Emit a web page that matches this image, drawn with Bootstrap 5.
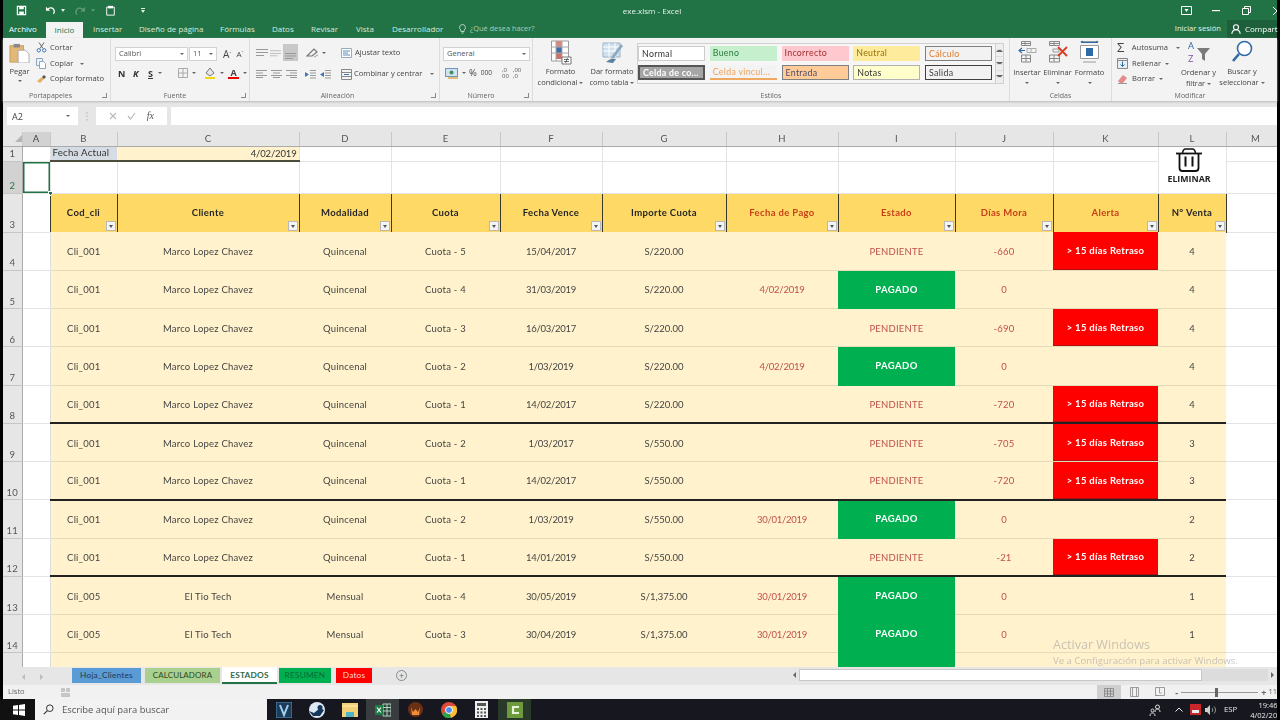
<!DOCTYPE html>
<html lang="es">
<head>
<meta charset="utf-8">
<title>exe.xlsm - Excel</title>
<link rel="stylesheet" href="https://cdn.jsdelivr.net/npm/bootstrap@5.3.0/dist/css/bootstrap.min.css">
<style>
html,body{height:720px;overflow:hidden;background:#000}
body{font-family:"Open Sans","Liberation Sans",sans-serif;font-size:8px;color:#444;line-height:1}
.xl-app{width:1280px;height:720px;display:flex;flex-direction:column;padding:0 3px;position:relative;overflow:hidden;filter:blur(.35px)}
svg{display:block;flex:none}
/* title */
.xl-top{height:38px;background:#217346;color:#e8f3ec;flex:none}
.xl-qat{height:20px;position:relative}
.xl-qat svg{position:absolute}
.xl-title{width:100%;text-align:center;font-size:8px;padding-top:7px;padding-left:24px}
.xl-tabs{height:18px;font-size:8px;color:#d7e9dd;white-space:nowrap}
.xl-tabs span{flex:none}
.xl-file{margin-left:6px;width:37px;color:#fff}
.xl-home{width:37px;height:16px;background:#f3f3f3;color:#217346;text-align:center;line-height:16px;margin-top:2px}
.xl-share{width:50px;height:18px;background:#1d5f3a;color:#fff;margin-left:6px}
/* ribbon */
.xl-ribbon{height:63px;background:#f3f3f3;flex:none;box-shadow:0 1px 2px #bbb;position:relative}
.xl-grp{height:63px;display:flex;flex-direction:column;border-right:1px solid #dcdcdc;position:relative;flex:none}
.xl-grp-b{height:50px;flex:none;position:relative}
.xl-lbl{height:13px;text-align:center;font-size:7px;color:#666;line-height:15px}
.xl-launch{position:absolute;right:3px;bottom:3px;width:5px;height:5px;border-right:1px solid #888;border-bottom:1px solid #888}
.g1{width:108px}.g2{width:139px}.g3{width:190px}.g4{width:93px}.g5{width:477px}.g6{width:102px}.g7{width:164px;border:0}
.g1 .xl-lbl{padding-right:12px}.g2 .xl-lbl{padding-right:10px}.g3 .xl-lbl{padding-right:14px}.g4 .xl-lbl{padding-right:10px}
.xl-i{font-size:7.6px;color:#444;white-space:nowrap}
.xl-tg{gap:3px}
.xl-stack{display:flex;flex-direction:column;justify-content:space-between}
.xl-rows{height:42px;margin-top:4px}
.xl-box{height:14px;background:#fff;border:1px solid #d2d2d2;color:#555;font-size:7.5px;padding:0 3px;display:flex;align-items:center;justify-content:space-between}
.xl-caret{width:0;height:0;border-left:2px solid transparent;border-right:2px solid transparent;border-top:2px solid #666;flex:none;display:inline-block;vertical-align:middle}
.xl-big{display:flex;flex-direction:column;align-items:center;flex:none;text-align:center;font-size:7.5px;line-height:11px;color:#444}
.xl-bigimg{height:26px;display:flex;align-items:center;justify-content:center;margin-bottom:1px}
.xl-bigimg.xl-lo{margin-bottom:2px}
.xl-tick{font-weight:700;font-size:9px;color:#333}
/* gallery */
.xl-gal{width:358px;height:41px;margin-top:5px;border:1px solid #d0d0d0;border-right:0;background:#f6f6f6;display:grid;grid-template-columns:repeat(5,67px);grid-auto-rows:15px;align-content:start;column-gap:4.75px;row-gap:4px;padding:2px 0 0 0;flex:none}
.xl-st{height:15px;font-size:8.8px;line-height:14px;padding-left:3px;overflow:hidden;white-space:nowrap;font-family:"Lato","Open Sans",sans-serif;letter-spacing:.3px}
.st-n{background:#fff;border:1px solid #ccc;color:#333}
.st-b{background:#c6efce;color:#2b7a3b}
.st-i{background:#ffc7ce;color:#a03030}
.st-ne{background:#ffeb9c;color:#96700a}
.st-c{background:#f2f2f2;border:1px solid #7f7f7f;color:#e07a2a}
.st-ce{background:#a5a5a5;border:2px solid #555;color:#fff;font-weight:700;line-height:11px}
.st-v{background:#f3f3f3;color:#f0a05a;border-bottom:2px solid #f0a860}
.st-e{background:#ffcc99;border:1px solid #7f7f7f;color:#4a4a6a}
.st-no{background:#ffffcc;border:1px solid #b2b2b2;color:#333}
.st-s{background:#f2f2f2;border:1px solid #3f3f3f;color:#3f3f3f}
.xl-galbar{width:9px;height:41px;margin-top:5px;border:1px solid #d0d0d0;background:#eee;display:flex;flex-direction:column;flex:none}
.xl-galbar i{flex:1;display:flex;align-items:center;justify-content:center;border-bottom:1px solid #ddd}
/* formula */
.xl-fbar{height:31px;background:#e6e6e6;padding:6px 0 7px 4px;flex:none;align-items:stretch}
.xl-fbar>div{background:#fff;display:flex;align-items:center;font-size:9px;color:#444}
.xl-name{width:71px;padding:0 8px 0 5px;justify-content:space-between}
.xl-grip{width:18px;display:flex;align-items:center;justify-content:center;flex:none}
.xl-fbtn{width:71px;justify-content:space-around;padding:0 8px}
.xl-finput{flex:1;margin-left:4px}
/* sheet */
.xl-wrap{height:535px;flex:none;overflow:hidden;background:#fff;position:relative}
table.xl-sheet{table-layout:fixed;width:1274px;margin:0;border-collapse:collapse;font-family:"Lato","Open Sans",sans-serif;font-size:9.5px;color:#444;letter-spacing:.22px;--bs-table-bg:transparent;--bs-table-color:#444;--bs-border-width:0}
table.xl-sheet>*>tr>*{padding:0;text-align:center;vertical-align:middle;font-weight:400;border:1px solid #e3e3e3;border-width:0 1px 1px 0;box-shadow:none;line-height:1}
table.xl-sheet>*>tr.h-c>*{background:#e6e6e6;color:#555;font-size:9.5px;border-color:#c8c8c8;border-bottom:1px solid #aaa}
table.xl-sheet>*>tr.h-c>th.xl-cm{padding-left:8px}
table.xl-sheet>*>tr>th.xl-rh{background:#e6e6e6;color:#555;font-size:9.5px;vertical-align:bottom;padding-bottom:2px;border-color:#c6c6c6;border-right:1px solid #aaa}
table.xl-sheet>*>tr.h-c>th.xl-on,table.xl-sheet>*>tr>th.xl-on{background:#d2d2d2;color:#217346}
table.xl-sheet>*>tr.h-c>th.xl-on{background:#d2d2d2;color:#444}
table.xl-sheet>*>tr>td.xl-sel{position:relative;box-shadow:inset 0 0 0 1.5px #217346}
.xl-handle{position:absolute;right:-3px;bottom:-3px;width:5px;height:5px;background:#217346;border:1px solid #fff}
table.xl-sheet>*>tr>td.c-fa{background:#d6dce4;text-align:left;padding-left:2px;color:#333;font-size:9.7px;border-bottom:2px solid #4d4d3c;border-right:0}
table.xl-sheet>*>tr>td.c-fd{background:#fff2cc;text-align:right;padding-right:2px;color:#333;font-size:9.5px;letter-spacing:-.15px;border-bottom:2px solid #4d4d3c}
table.xl-sheet>*>tr.h-h>td{background:#ffd966;font-weight:700;font-size:9.5px;color:#262626;position:relative;border:1px solid #3a3a2c;border-bottom:0;padding-bottom:0;letter-spacing:.35px}
table.xl-sheet>*>tr.h-h>td.xl-a,table.xl-sheet>*>tr.h-h>td.xl-m{background:#fff;border:0;border-right:1px solid #e3e3e3;border-bottom:1px solid #e3e3e3}
table.xl-sheet>*>tr.h-h>td.xl-a{border-right:0}
table.xl-sheet>*>tr.h-h>td.t-red{color:#c8401a}
.xl-fil{position:absolute;right:1px;bottom:1px;width:10px;height:10px;background:#f4f4f4;border:1px solid #b8b8b8;display:flex;align-items:center;justify-content:center}
.xl-fil::after{content:"";border-left:2.5px solid transparent;border-right:2.5px solid transparent;border-top:3px solid #555}
tr.xl-r{height:38.27px}
table.xl-sheet>*>tr.xl-r>td{background:#fff2cc;border-color:#e4dcba;border-width:0 0 1px 0;padding-top:1.5px}
table.xl-sheet>*>tr.xl-r>td:nth-child(7),table.xl-sheet>*>tr.xl-r>td:nth-child(9){letter-spacing:-.25px}
table.xl-sheet>*>tr.xl-r>td:nth-child(8){letter-spacing:0}
table.xl-sheet>*>tr.xl-r>td.xl-a,table.xl-sheet>*>tr.xl-r>td.xl-m{background:#fff;border-color:#e3e3e3}
table.xl-sheet>*>tr.xl-r>td.xl-a{border-right:1px solid #ddd}
table.xl-sheet>*>tr.xl-end>td:not(.xl-a):not(.xl-m){border-bottom:2px solid #222}
table.xl-sheet>*>tr.xl-r>td.t-r{color:#c0504d}
table.xl-sheet>*>tr.xl-r>td.c-g{background:#00b050;color:#fff;font-weight:700;border-color:#00b050;letter-spacing:.4px;padding-top:0}
table.xl-sheet>*>tr.xl-r>td.c-x{background:#f00;color:#fff;font-weight:700;box-shadow:inset 0 -1px 0 #b01010;letter-spacing:.3px;padding-top:0}
table.xl-sheet>*>tr>td.xl-elim{vertical-align:top;padding:1px 6px 0 0;font-weight:700;color:#222;font-size:8.8px;font-family:"Open Sans",sans-serif;letter-spacing:0;white-space:nowrap}
.xl-elim svg{margin:0 auto 3px}
.xl-wm{position:absolute;left:1050px;top:507px;color:rgba(165,165,165,.62);font-family:"Open Sans",sans-serif;pointer-events:none;white-space:nowrap}
.xl-wm b{display:block;font-weight:400;font-size:12.6px;margin-bottom:4px}
.xl-wm i{display:block;font-style:normal;font-size:9.6px}
/* sheet tabs */
.xl-sheetbar{height:18px;background:#e6e6e6;flex:none;position:relative;padding-top:1px}
.xl-nav{width:69px;margin-right:-69px;flex:none;display:flex;gap:15px;padding:6px 0 0 19px}
.xl-nav i{display:block}
.xl-tab{height:15px;font-size:8.3px;text-align:center;line-height:14px;flex:none;font-family:"Lato","Open Sans",sans-serif;letter-spacing:.2px}
.tb-b{width:69px;margin-left:69px;background:#5b9bd5;color:#203a55}
.tb-c{width:75px;margin-left:4px;background:#a9d08e;color:#2c4a20;font-size:8px;letter-spacing:.1px}
.tb-e{width:55px;margin-left:2px;background:#fff;color:#2f6a4a;font-weight:700;height:17px;margin-top:-1px;border-bottom:2px solid #217346;line-height:16px}
.tb-r{width:52px;margin-left:2px;background:#00b050;color:#0b6b35}
.tb-d{width:36px;margin-left:5px;background:#f00;color:#ffd5d5}
.xl-plus{margin-left:24px;margin-top:2px;width:11px;height:11px;border:1px solid #888;border-radius:50%;color:#666;font-size:9px;line-height:9px;text-align:center}
.xl-hs{margin-left:auto;width:487px;height:12px;display:flex;align-items:stretch;margin-top:1px}
.xl-hs i{display:block}
.xl-hs .hs-t{width:403px;background:#fff;border:1px solid #c8c8c8}
.xl-hs .hs-r{flex:1;background:#dcdcdc}
.xl-hs .hs-a{width:9px;display:flex;align-items:center;justify-content:center}
.xl-tri-l{border-top:3px solid transparent;border-bottom:3px solid transparent;border-right:3px solid #666}
.xl-tri-r{border-top:3px solid transparent;border-bottom:3px solid transparent;border-left:3px solid #666}
.xl-nav .xl-tri-l,.xl-nav .xl-tri-r{border-right-color:#bbb;border-left-color:#bbb}
/* status */
.xl-status{height:14px;background:#f1f1f1;flex:none;font-size:7.5px;color:#666;padding-left:5px}
.xl-sl{width:77px;height:1px;background:#999;position:relative;margin:0 3px}
.xl-sl i{position:absolute;left:34px;top:-4px;width:3px;height:9px;background:#666;display:block}
.xl-vbtn{height:14px;display:flex;align-items:center;justify-content:center;flex:none}
.vb1{width:24px;background:#cfcfcf}.vb2{width:28px}.vb3{width:22px}
.xl-minus{margin-left:4.5px;font-weight:700;font-size:9px}
.xl-zoomv{margin-left:2px}
/* taskbar */
.xl-task{height:21px;background:#17181f;flex:none;margin:0 0 0 -3px;color:#fff;position:relative;overflow:hidden}
.xl-start{width:35px;height:21px;background:#111;display:flex;align-items:center;justify-content:center;padding-left:3px;flex:none}
.xl-search{width:232px;height:21px;background:#f2f2f2;color:#555;font-size:9.4px;display:flex;align-items:center;padding-left:8px;gap:8px;flex:none}
.xl-ti{width:33px;height:21px;display:flex;align-items:center;justify-content:center;flex:none}
.xl-ti.on{background:#3a3d40}
.xl-ti.xl-ti-c{background:#2a3a2a}
.xl-tray{margin-left:auto;display:flex;align-items:center;font-size:7.8px;color:#e8e8e8;margin-right:-15px}
.xl-clock{text-align:center;line-height:10px;width:48px;font-size:7.5px;white-space:nowrap}
</style>
</head>
<body>
<div class="xl-app">

<header class="xl-top">
  <div class="xl-qat">
    <svg style="left:13px;top:5px" width="11" height="11" viewBox="0 0 12 12"><path d="M1.500 1.500h9v9h-9z" fill="none" stroke="#fff" stroke-width="1.300"/><path d="M3.500 1.500h5v3h-5zM3.500 7h5v3.500h-5z" fill="#fff"/></svg>
    <svg style="left:42px;top:5px" width="11" height="10" viewBox="0 0 13 12"><path d="M3 5.500C5 2.500 10 2.500 11 7c.2 1.200-.2 2.500-1 3.500" fill="none" stroke="#fff" stroke-width="1.500"/><path d="M1 2v5h5z" fill="#fff"/></svg>
    <svg style="left:58px;top:9px" width="4" height="3" viewBox="0 0 4 3"><path d="M0 0h4L2 3z" fill="#dfeee5"/></svg>
    <svg style="left:71px;top:5px" width="12" height="11" viewBox="0 0 13 12" opacity=".28"><path d="M10 5.500C8 2.500 3 2.500 2 7c-.2 1.200.2 2.500 1 3.500" fill="none" stroke="#fff" stroke-width="1.500"/><path d="M12 2v5H7z" fill="#fff"/></svg>
    <svg style="left:88px;top:9px" width="4" height="3" viewBox="0 0 4 3" opacity=".3"><path d="M0 0h4L2 3z" fill="#dfeee5"/></svg>
    <svg style="left:102px;top:5px" width="11" height="11" viewBox="0 0 12 13"><path d="M1.500 2.500h9v9.500h-9z" fill="none" stroke="#fff" stroke-width="1.100"/><path d="M3 1h6v3H3z" fill="#fff"/></svg>
    <svg style="left:138px;top:8px" width="4" height="5" viewBox="0 0 4 5"><path d="M0 0h4v1H0zM0 2h4L2 5z" fill="#dfeee5"/></svg>
    <div class="xl-title">exe.xlsm - Excel</div>
    <svg style="left:1178px;top:6px" width="11" height="9" viewBox="0 0 11 9"><path d="M.5.500h10v8H.5z" fill="none" stroke="#fff"/><path d="M3.500 3h4L5.500 6z" fill="#fff"/></svg>
    <svg style="left:1209px;top:10px" width="8" height="2" viewBox="0 0 8 2"><path d="M0 0h8v1.200H0z" fill="#fff"/></svg>
    <svg style="left:1239px;top:6px" width="9" height="9" viewBox="0 0 9 9"><path d="M.5 2.500h6v6h-6zM2.500 2.500v-2h6v6h-2" fill="none" stroke="#fff"/></svg>
    <svg style="left:1270px;top:7px" width="4" height="8" viewBox="0 0 4 8"><path d="M0 0l4 4M0 8l4-4" stroke="#fff" fill="none"/></svg>
  </div>
  <div class="xl-tabs d-flex align-items-center">
    <span class="xl-file">Archivo</span>
    <span class="xl-home">Inicio</span>
    <span style="margin-left:10px;width:46px">Insertar</span>
    <span style="width:81px">Diseño de página</span>
    <span style="width:52px">Fórmulas</span>
    <span style="width:39px">Datos</span>
    <span style="width:45px">Revisar</span>
    <span style="width:36px">Vista</span>
    <span style="width:67px">Desarrollador</span>
    <svg width="7" height="10" viewBox="0 0 7 10"><path d="M3.500.5a3 3 0 0 1 1.600 5.500v1.500H1.900V6A3 3 0 0 1 3.500.5zM2.400 9h2.200" fill="none" stroke="#d7e9dd" stroke-width=".8"/></svg>
    <span style="margin-left:4px;color:#a9cdb7;font-size:7.4px">¿Qué desea hacer?</span>
    <span class="ms-auto" style="color:#e6f1ea;font-size:7.6px">Iniciar sesión</span>
    <span class="xl-share d-flex align-items-center gap-1 ps-1">
      <svg width="10" height="10" viewBox="0 0 10 10"><circle cx="5" cy="3.200" r="2.500" fill="none" stroke="#fff" stroke-width="1.100"/><path d="M.8 9.800C1.200 7 3 5.800 5 5.800s3.800 1.200 4.200 4" fill="none" stroke="#fff" stroke-width="1.100"/></svg>Compart
    </span>
  </div>
</header>

<section class="xl-ribbon d-flex">
  <div class="xl-grp g1">
    <div class="xl-grp-b d-flex">
      <div class="xl-big" style="width:33px;margin-top:5px">
        <svg width="21" height="20" viewBox="0 0 23 22"><rect x="1" y="3" width="15" height="18" fill="#e3b877" stroke="#c19a5b"/><rect x="5" y="1" width="7" height="4" fill="#8a8a8a"/><path d="M10 8h8l4 4v10H10z" fill="#fff" stroke="#a8a8a8"/></svg>
        <span style="margin-top:3px">Pegar</span><i class="xl-caret" style="margin-top:3px"></i>
      </div>
      <div class="xl-stack xl-rows" style="width:74px">
        <span class="xl-i d-flex align-items-center xl-tg"><svg width="11" height="11" viewBox="0 0 11 11"><path d="M3 .5l4 6M8 .5l-4 6" stroke="#666" fill="none"/><circle cx="2.800" cy="8.300" r="1.700" fill="none" stroke="#3f79b5"/><circle cx="8.200" cy="8.300" r="1.700" fill="none" stroke="#3f79b5"/></svg>Cortar</span>
        <span class="xl-i d-flex align-items-center xl-tg"><svg width="11" height="11" viewBox="0 0 11 11"><path d="M.5.500h6v7h-6z" fill="#eef3f8" stroke="#8da6be"/><path d="M3.500 3.500h4l2 2v5h-6z" fill="#fff" stroke="#8da6be"/></svg>Copiar&nbsp;&nbsp;<i class="xl-caret"></i></span>
        <span class="xl-i d-flex align-items-center xl-tg"><svg width="11" height="10" viewBox="0 0 11 10"><path d="M1 7l5-4 2 2-4 4z" fill="#e6b15c"/><path d="M6 3l2-2 2 2-2 2z" fill="#555"/></svg>Copiar formato</span>
      </div>
    </div>
    <div class="xl-lbl">Portapapeles</div><i class="xl-launch"></i>
  </div>

  <div class="xl-grp g2">
    <div class="xl-grp-b xl-stack" style="padding:9px 0 9px 4px">
      <div class="d-flex align-items-center">
        <div class="xl-box" style="width:73px">Calibri<i class="xl-caret"></i></div>
        <div class="xl-box" style="width:28px;margin-left:1px">11<i class="xl-caret"></i></div>
        <span class="xl-i" style="font-size:10px;margin-left:6px">A<sup style="font-size:5px;color:#2b6cb0">ˆ</sup></span>
        <span class="xl-i" style="font-size:8px;margin-left:5px">A<sup style="font-size:5px;color:#2b6cb0">ˇ</sup></span>
      </div>
      <div class="d-flex align-items-center" style="padding-left:3px">
        <span class="xl-tick" style="width:15px">N</span>
        <span class="xl-tick fst-italic" style="width:15px">K</span>
        <span class="xl-tick text-decoration-underline" style="width:10px">S</span>
        <i class="xl-caret"></i>
        <svg class="ms-3" width="10" height="10" viewBox="0 0 10 10"><path d="M.5.500h9v9h-9zM5 .5v9M.5 5h9" fill="none" stroke="#aaa"/></svg>
        <i class="xl-caret ms-1"></i>
        <svg class="ms-2" width="12" height="12" viewBox="0 0 12 12"><path d="M2 6l4-5 4 5-4 3z" fill="#e8e8e8" stroke="#777"/><path d="M1 10h10v2H1z" fill="#f5d60c"/></svg>
        <i class="xl-caret ms-1"></i>
        <span class="ms-1 xl-i d-flex flex-column align-items-center" style="width:11px"><span style="font-weight:700;color:#444;font-size:9px">A</span><i style="width:11px;height:2px;background:#e00;display:block"></i></span>
        <i class="xl-caret ms-1"></i>
      </div>
    </div>
    <div class="xl-lbl">Fuente</div><i class="xl-launch"></i>
  </div>

  <div class="xl-grp g3">
    <div class="xl-grp-b xl-stack" style="padding:6px 0 8px 6px">
      <div class="d-flex align-items-center" style="height:17px">
        <svg width="12" height="8" viewBox="0 0 12 8"><path d="M0 .5h12M0 3.500h12M0 6.500h8" stroke="#999" fill="none"/></svg>
        <svg style="margin-left:2px" width="11" height="8" viewBox="0 0 12 8"><path d="M0 1.500h12M0 4.500h12M0 7h8" stroke="#bbb" fill="none"/></svg>
        <span class="d-flex align-items-end justify-content-center" style="margin-left:2px;width:15px;height:17px;background:#c8c8c8;padding-bottom:2px"><svg width="11" height="6" viewBox="0 0 11 6"><path d="M0 .5h11M0 3h11M0 5.500h8" stroke="#999" fill="none"/></svg></span>
        <svg style="margin-left:8px" width="13" height="11" viewBox="0 0 13 11"><path d="M1 9l7-7 3 3-5 4z" fill="none" stroke="#777" stroke-width="1.200"/><path d="M8 10l4-2" stroke="#999"/></svg>
        <i class="xl-caret" style="margin-left:3px"></i>
        <svg style="margin-left:15px" width="11" height="10" viewBox="0 0 11 10"><path d="M.5.500h10v9H.5z" fill="#fff" stroke="#9ab"/><path d="M2 3h7M2 5h5M2 7h7" stroke="#5a8fc0"/></svg>
        <span class="xl-i" style="margin-left:3px">Ajustar texto</span>
      </div>
      <div class="d-flex align-items-center" style="height:12px">
        <svg width="11" height="8" viewBox="0 0 11 8"><path d="M0 .5h11M0 3h7M0 5.500h11M0 7.500h7" stroke="#999" fill="none"/></svg>
        <svg class="ms-1" width="11" height="8" viewBox="0 0 11 8"><path d="M0 .5h11M2 3h7M0 5.500h11M2 7.500h7" stroke="#999" fill="none"/></svg>
        <svg class="ms-1" width="11" height="8" viewBox="0 0 11 8"><path d="M0 .5h11M4 3h7M0 5.500h11M4 7.500h7" stroke="#999" fill="none"/></svg>
        <svg style="margin-left:8px" width="11" height="9" viewBox="0 0 11 9"><path d="M5 .5h6M5 3h6M5 5.500h6M5 8h6" stroke="#999" fill="none"/><path d="M4 4.500L0 2v5z" fill="#3f79b5"/></svg>
        <svg class="ms-1" width="11" height="9" viewBox="0 0 11 9"><path d="M5 .5h6M5 3h6M5 5.500h6M5 8h6" stroke="#999" fill="none"/><path d="M0 4.500L4 2v5z" fill="#3f79b5"/></svg>
        <svg style="margin-left:10px" width="11" height="11" viewBox="0 0 11 11"><path d="M.5.500h10v10H.5zM.5 3.500h10M.5 7.500h10" fill="none" stroke="#888"/><path d="M3 5.500h5" stroke="#3f79b5"/></svg>
        <span class="xl-i d-flex align-items-center gap-2" style="margin-left:2px">Combinar y centrar<i class="xl-caret"></i></span>
      </div>
    </div>
    <div class="xl-lbl">Alineación</div><i class="xl-launch"></i>
  </div>

  <div class="xl-grp g4">
    <div class="xl-grp-b xl-stack" style="padding:9px 0 9px 3px">
      <div class="xl-box" style="width:87px">General<i class="xl-caret"></i></div>
      <div class="d-flex align-items-center" style="padding-left:2px">
        <svg width="15" height="11" viewBox="0 0 15 11"><rect x=".5" y=".5" width="12" height="8" fill="#cfe3f3" stroke="#6c97b9"/><circle cx="6.500" cy="4.500" r="2" fill="#3f8f5f"/><path d="M3 10h10" stroke="#d9a441" stroke-width="1.400"/></svg>
        <i class="xl-caret" style="margin-left:2px"></i>
        <span class="xl-i" style="font-size:9.500px;margin-left:3px">%</span>
        <span class="xl-i" style="font-size:6.500px;margin-left:4px">000</span>
        <span class="xl-i" style="font-size:6px;margin-left:10px;line-height:6px;color:#555">,0<br>00</span>
        <span class="xl-i ms-1" style="font-size:6px;line-height:6px;color:#555">,00<br>,0</span>
      </div>
    </div>
    <div class="xl-lbl">Número</div><i class="xl-launch"></i>
  </div>

  <div class="xl-grp g5">
    <div class="xl-grp-b d-flex">
      <div class="xl-big" style="width:55px;margin-top:2px">
        <div class="xl-bigimg"><svg width="22" height="25" viewBox="0 0 22 25"><path d="M1.500 1h17v20h-17z" fill="#fff" stroke="#9a9a9a"/><path d="M6 1h6v6H6z" fill="#d88a80"/><path d="M6 7h6v6H6z" fill="#3e6ea8"/><path d="M6 13h6v6H6z" fill="#c97367"/><path d="M1.500 7h17M1.500 13h17M6 1v20M12 1v20" stroke="#a8a8a8" fill="none"/><path d="M12 17h9v7h-9z" fill="#fff" stroke="#777"/><path d="M14 21.500h5M14 19.500h5M15.500 23l2-5" stroke="#333" stroke-width=".7" fill="none"/></svg></div>
        <span>Formato</span><span class="text-nowrap">condicional <i class="xl-caret"></i></span>
      </div>
      <div class="xl-big" style="width:48px;margin-top:2px;margin-right:1px">
        <div class="xl-bigimg"><svg width="22" height="25" viewBox="0 0 22 25"><path d="M2 3h17v14H2z" fill="#cfe0ee" stroke="#9ab4ca"/><path d="M2 7h17M2 11h17M8 3v14M14 3v14" stroke="#fff"/><path d="M20 4l-9 12-1 3 3-1 9-12z" fill="#8fa8bd"/><path d="M5 22c3-3 7-4 10-3l-3 4z" fill="#587f9e"/></svg></div>
        <span>Dar formato</span><span class="text-nowrap">como tabla <i class="xl-caret"></i></span>
      </div>
      <div class="xl-gal">
        <div class="xl-st st-n">Normal</div><div class="xl-st st-b">Bueno</div><div class="xl-st st-i">Incorrecto</div><div class="xl-st st-ne">Neutral</div><div class="xl-st st-c">Cálculo</div>
        <div class="xl-st st-ce">Celda de co...</div><div class="xl-st st-v">Celda vincul...</div><div class="xl-st st-e">Entrada</div><div class="xl-st st-no">Notas</div><div class="xl-st st-s">Salida</div>
      </div>
      <div class="xl-galbar"><i><i class="xl-caret" style="transform:rotate(180deg)"></i></i><i><i class="xl-caret"></i></i><i style="border:0"><i class="xl-caret"></i></i></div>
    </div>
    <div class="xl-lbl">Estilos</div>
  </div>

  <div class="xl-grp g6">
    <div class="xl-grp-b d-flex" style="padding-left:2px">
      <div class="xl-big" style="width:30px;margin-top:1px">
        <div class="xl-bigimg xl-lo"><svg width="20" height="24" viewBox="0 0 20 24"><path d="M4.500 1.500h9v4h-9v-4M4.500 3.500h9M8 1.500v4" fill="none" stroke="#888"/><path d="M10 8.500h9v4h-9zM14 8.500v4" fill="none" stroke="#aaa"/><path d="M8 10.500H2M5 8l-3 2.500L5 13" fill="none" stroke="#2c6aa6" stroke-width="1.100"/><path d="M4.500 15h9v7h-9zM4.500 18.500h9M9 15v7" fill="none" stroke="#888"/></svg></div>
        <span>Insertar</span><i class="xl-caret mt-1"></i>
      </div>
      <div class="xl-big" style="width:31px;margin-top:1px">
        <div class="xl-bigimg xl-lo"><svg width="24" height="24" viewBox="0 0 24 24"><path d="M3.500 1.500h10v4h-10zM3.500 3.500h10M8 1.500v4M3.500 15h10v7h-10zM3.500 18.500h10M8 15v7" fill="none" stroke="#888"/><path d="M7 9h6v3H7z" fill="none" stroke="#999"/><path d="M12 7l9 9M21 7l-9 9" stroke="#d9412b" stroke-width="2"/></svg></div>
        <span>Eliminar</span><i class="xl-caret mt-1"></i>
      </div>
      <div class="xl-big" style="width:33px;margin-top:1px">
        <div class="xl-bigimg xl-lo"><svg width="21" height="24" viewBox="0 0 21 24"><path d="M1.500 5.500h18v13h-18zM4 22h13M1.500 1.500h18" fill="#fff" stroke="#999"/><path d="M7 8h7v8H7z" fill="#2e6aa6"/><path d="M2 2.500h17M2 2.500l2-1.500M19 2.500l-2-1.500" stroke="#2e6aa6" fill="none"/></svg></div>
        <span>Formato</span><i class="xl-caret mt-1"></i>
      </div>
    </div>
    <div class="xl-lbl">Celdas</div>
  </div>

  <div class="xl-grp g7">
    <div class="xl-grp-b d-flex">
      <div class="xl-stack xl-rows" style="width:68px;padding-left:5px">
        <span class="xl-i d-flex align-items-center gap-1"><span style="font-size:13px;line-height:11px;width:11px;color:#444">Σ</span>Autosuma&nbsp;&nbsp;<i class="xl-caret"></i></span>
        <span class="xl-i d-flex align-items-center gap-1"><svg width="11" height="11" viewBox="0 0 11 11"><path d="M.5.500h10v10H.5z" fill="#e8eff6" stroke="#888"/><path d="M.5 2.500h10" stroke="#888"/><path d="M5.500 3.500v5M3.500 6.500l2 2 2-2" stroke="#2e6aa6" fill="none"/></svg>Rellenar<i class="xl-caret"></i></span>
        <span class="xl-i d-flex align-items-center gap-1"><svg width="11" height="10" viewBox="0 0 11 10"><path d="M1 7l5-6 4 3-4 5H3z" fill="#e58a8a"/><path d="M1 9.500h9" stroke="#999"/></svg>Borrar<i class="xl-caret"></i></span>
      </div>
      <div class="xl-big" style="width:37px;margin-top:1px">
        <div class="xl-bigimg xl-lo"><svg width="24" height="26" viewBox="0 0 24 26"><text x="1" y="10.400" font-size="9.500" fill="#2e6aa6" font-family="Open Sans,sans-serif">A</text><text x="1" y="23.200" font-size="9.500" fill="#7a4ea0" font-family="Open Sans,sans-serif">Z</text><path d="M10 9h13l-5 6v7l-3-2v-5z" fill="#7a7a7a"/></svg></div>
        <span>Ordenar y</span><span class="text-nowrap">filtrar <i class="xl-caret"></i></span>
      </div>
      <div class="xl-big" style="width:50px;margin-top:1px">
        <div class="xl-bigimg xl-lo"><svg width="22" height="25" viewBox="0 0 22 25"><circle cx="13.500" cy="9.500" r="7" fill="#fff" stroke="#2e6aa6" stroke-width="1.600"/><path d="M8 15l-6 7" stroke="#2e6aa6" stroke-width="2.600"/></svg></div>
        <span>Buscar y</span><span class="text-nowrap">seleccionar <i class="xl-caret"></i></span>
      </div>
    </div>
    <div class="xl-lbl" style="width:90px;margin-left:33px">Modificar</div>
  </div>
</section>

<div class="xl-fbar d-flex">
  <div class="xl-name">A2<i class="xl-caret"></i></div>
  <span class="xl-grip"><svg width="2" height="9" viewBox="0 0 2 9"><path d="M1 0v1.500M1 3.500v1.500M1 7v1.500" stroke="#bbb" stroke-width="1.200"/></svg></span>
  <div class="xl-fbtn">
    <svg width="8" height="8" viewBox="0 0 8 8"><path d="M1 1l6 6M7 1L1 7" stroke="#bbb" fill="none" stroke-width="1.200"/></svg>
    <svg width="9" height="8" viewBox="0 0 9 8"><path d="M1 4l2.500 3L8 1" stroke="#bbb" fill="none" stroke-width="1.200"/></svg>
    <span class="fst-italic" style="font-family:'Liberation Serif',serif;font-size:10px;color:#555">fx</span>
  </div>
  <div class="xl-finput"></div>
</div>

<main class="xl-wrap">
<table class="table xl-sheet">
<colgroup><col style="width:19px"><col style="width:28px"><col style="width:67px"><col style="width:182px"><col style="width:92px"><col style="width:109px"><col style="width:102px"><col style="width:124px"><col style="width:112px"><col style="width:117px"><col style="width:98px"><col style="width:105px"><col style="width:68px"><col style="width:51px"></colgroup>
<thead>
<tr class="h-c" style="height:14px"><th><svg class="ms-auto" width="7" height="7" viewBox="0 0 7 7"><path d="M7 0v7H0z" fill="#b5b5b5"/></svg></th><th class="xl-on">A</th><th>B</th><th>C</th><th>D</th><th>E</th><th>F</th><th>G</th><th>H</th><th>I</th><th>J</th><th>K</th><th>L</th><th class="xl-cm">M</th></tr>
</thead>
<tbody>
<tr style="height:15px"><th class="xl-rh">1</th><td></td><td class="c-fa">Fecha Actual</td><td class="c-fd">4/02/2019</td><td></td><td></td><td></td><td></td><td></td><td></td><td></td><td></td><td class="xl-elim" rowspan="2"><svg width="26" height="24" viewBox="0 0 26 24"><path d="M0 5.500h26" stroke="#111" stroke-width="1.800" fill="none"/><path d="M6.500 5c.5-3 1-4 3-4h7c2 0 2.500 1 3 4" stroke="#111" stroke-width="1.500" fill="none"/><path d="M3.500 6v14c0 2 1 3 3 3h13c2 0 3-1 3-3V6" stroke="#111" stroke-width="1.800" fill="none"/><path d="M9.500 8.500v10M16.500 8.500v10" stroke="#111" stroke-width="2" fill="none"/></svg>ELIMINAR</td><td></td></tr>
<tr style="height:32px"><th class="xl-rh xl-on">2</th><td class="xl-sel"><i class="xl-handle"></i></td><td></td><td></td><td></td><td></td><td></td><td></td><td></td><td></td><td></td><td></td><td></td></tr>
<tr class="h-h" style="height:39px"><th class="xl-rh">3</th><td class="xl-a"></td><td>Cod_cli<i class="xl-fil"></i></td><td>Cliente<i class="xl-fil"></i></td><td>Modalidad<i class="xl-fil"></i></td><td>Cuota<i class="xl-fil"></i></td><td>Fecha Vence<i class="xl-fil"></i></td><td>Importe Cuota<i class="xl-fil"></i></td><td class="t-red">Fecha de Pago<i class="xl-fil"></i></td><td class="t-red">Estado<i class="xl-fil"></i></td><td class="t-red">Días Mora<i class="xl-fil"></i></td><td class="t-red">Alerta<i class="xl-fil"></i></td><td>N° Venta<i class="xl-fil"></i></td><td class="xl-m"></td></tr>
<tr class="xl-r"><th class="xl-rh">4</th><td class="xl-a"></td><td>Cli_001</td><td>Marco Lopez Chavez</td><td>Quincenal</td><td>Cuota - 5</td><td>15/04/2017</td><td>S/220.00</td><td class="t-r"></td><td class="t-r">PENDIENTE</td><td class="t-r">-660</td><td class="c-x">&gt; 15 días Retraso</td><td>4</td><td class="xl-m"></td></tr>
<tr class="xl-r"><th class="xl-rh">5</th><td class="xl-a"></td><td>Cli_001</td><td>Marco Lopez Chavez</td><td>Quincenal</td><td>Cuota - 4</td><td>31/03/2019</td><td>S/220.00</td><td class="t-r">4/02/2019</td><td class="c-g">PAGADO</td><td class="t-r">0</td><td></td><td>4</td><td class="xl-m"></td></tr>
<tr class="xl-r"><th class="xl-rh">6</th><td class="xl-a"></td><td>Cli_001</td><td>Marco Lopez Chavez</td><td>Quincenal</td><td>Cuota - 3</td><td>16/03/2017</td><td>S/220.00</td><td class="t-r"></td><td class="t-r">PENDIENTE</td><td class="t-r">-690</td><td class="c-x">&gt; 15 días Retraso</td><td>4</td><td class="xl-m"></td></tr>
<tr class="xl-r"><th class="xl-rh">7</th><td class="xl-a"></td><td>Cli_001</td><td>Marco Lopez Chavez</td><td>Quincenal</td><td>Cuota - 2</td><td>1/03/2019</td><td>S/220.00</td><td class="t-r">4/02/2019</td><td class="c-g">PAGADO</td><td class="t-r">0</td><td></td><td>4</td><td class="xl-m"></td></tr>
<tr class="xl-r xl-end"><th class="xl-rh">8</th><td class="xl-a"></td><td>Cli_001</td><td>Marco Lopez Chavez</td><td>Quincenal</td><td>Cuota - 1</td><td>14/02/2017</td><td>S/220.00</td><td class="t-r"></td><td class="t-r">PENDIENTE</td><td class="t-r">-720</td><td class="c-x">&gt; 15 días Retraso</td><td>4</td><td class="xl-m"></td></tr>
<tr class="xl-r"><th class="xl-rh">9</th><td class="xl-a"></td><td>Cli_001</td><td>Marco Lopez Chavez</td><td>Quincenal</td><td>Cuota - 2</td><td>1/03/2017</td><td>S/550.00</td><td class="t-r"></td><td class="t-r">PENDIENTE</td><td class="t-r">-705</td><td class="c-x">&gt; 15 días Retraso</td><td>3</td><td class="xl-m"></td></tr>
<tr class="xl-r xl-end"><th class="xl-rh">10</th><td class="xl-a"></td><td>Cli_001</td><td>Marco Lopez Chavez</td><td>Quincenal</td><td>Cuota - 1</td><td>14/02/2017</td><td>S/550.00</td><td class="t-r"></td><td class="t-r">PENDIENTE</td><td class="t-r">-720</td><td class="c-x">&gt; 15 días Retraso</td><td>3</td><td class="xl-m"></td></tr>
<tr class="xl-r"><th class="xl-rh">11</th><td class="xl-a"></td><td>Cli_001</td><td>Marco Lopez Chavez</td><td>Quincenal</td><td>Cuota - 2</td><td>1/03/2019</td><td>S/550.00</td><td class="t-r">30/01/2019</td><td class="c-g">PAGADO</td><td class="t-r">0</td><td></td><td>2</td><td class="xl-m"></td></tr>
<tr class="xl-r xl-end"><th class="xl-rh">12</th><td class="xl-a"></td><td>Cli_001</td><td>Marco Lopez Chavez</td><td>Quincenal</td><td>Cuota - 1</td><td>14/01/2019</td><td>S/550.00</td><td class="t-r"></td><td class="t-r">PENDIENTE</td><td class="t-r">-21</td><td class="c-x">&gt; 15 días Retraso</td><td>2</td><td class="xl-m"></td></tr>
<tr class="xl-r"><th class="xl-rh">13</th><td class="xl-a"></td><td>Cli_005</td><td>El Tio Tech</td><td>Mensual</td><td>Cuota - 4</td><td>30/05/2019</td><td>S/1,375.00</td><td class="t-r">30/01/2019</td><td class="c-g">PAGADO</td><td class="t-r">0</td><td></td><td>1</td><td class="xl-m"></td></tr>
<tr class="xl-r"><th class="xl-rh">14</th><td class="xl-a"></td><td>Cli_005</td><td>El Tio Tech</td><td>Mensual</td><td>Cuota - 3</td><td>30/04/2019</td><td>S/1,375.00</td><td class="t-r">30/01/2019</td><td class="c-g">PAGADO</td><td class="t-r">0</td><td></td><td>1</td><td class="xl-m"></td></tr>
<tr class="xl-r"><th class="xl-rh"></th><td class="xl-a"></td><td></td><td></td><td></td><td></td><td></td><td></td><td></td><td class="c-g"></td><td></td><td></td><td></td><td class="xl-m"></td></tr>
</tbody>
</table>
<div class="xl-wm"><b>Activar Windows</b><i>Ve a Configuración para activar Windows.</i></div>
</main>

<nav class="xl-sheetbar d-flex align-items-start">
  <div class="xl-nav"><i class="xl-tri-l"></i><i class="xl-tri-r"></i></div>
  <div class="xl-tab tb-b">Hoja_Clientes</div>
  <div class="xl-tab tb-c">CALCULADORA</div>
  <div class="xl-tab tb-e">ESTADOS</div>
  <div class="xl-tab tb-r">RESUMEN</div>
  <div class="xl-tab tb-d">Datos</div>
  <div class="xl-plus">+</div>
  <div class="xl-hs"><i class="hs-a"><i class="xl-tri-l"></i></i><i class="hs-t"></i><i class="hs-r"></i><i class="hs-a"><i class="xl-tri-r"></i></i></div>
</nav>

<footer class="xl-status d-flex align-items-center">
  <span>Listo</span>
  <svg style="margin-left:36px" width="9" height="9" viewBox="0 0 9 9"><path d="M.5.500h3v3h-3zM5.500.5h3v3h-3zM.5 5.500h8v3h-8z" fill="#c8c8c8" stroke="#aaa" stroke-width=".5"/></svg>
  <div class="ms-auto d-flex align-items-center">
    <span class="xl-vbtn vb1"><svg width="10" height="9" viewBox="0 0 10 9"><path d="M.5.500h9v8h-9zM.5 3.200h9M.5 5.800h9M3.500.5v8M6.500.5v8" fill="none" stroke="#777" stroke-width=".7"/></svg></span>
    <span class="xl-vbtn vb2"><svg width="9" height="10" viewBox="0 0 9 10"><path d="M.5.500h8v9h-8zM2.500.5v9M6.500.5v9" fill="none" stroke="#888" stroke-width=".8"/></svg></span>
    <span class="xl-vbtn vb3"><svg width="10" height="10" viewBox="0 0 10 10"><path d="M.5.500h9v8h-9M.5.500v8h3M4.500 1v5h2" fill="none" stroke="#888" stroke-width=".8"/></svg></span>
    <span class="xl-minus">-</span>
    <div class="xl-sl"><i></i></div>
    <span style="font-weight:700;font-size:9px">+</span>
    <span class="xl-zoomv">11</span>
  </div>
</footer>

<footer class="xl-task d-flex">
  <div class="xl-start"><svg width="12" height="12" viewBox="0 0 12 12"><path d="M0 1.700l5-.7v4.500H0zM6 .9l6-.9v5.500H6zM0 6.500h5V11l-5-.7zM6 6.500h6V12l-6-.9z" fill="#fff"/></svg></div>
  <div class="xl-search"><svg width="11" height="11" viewBox="0 0 11 11"><circle cx="6.800" cy="4.200" r="3.300" fill="none" stroke="#333"/><path d="M4.400 6.600L.8 10.200" stroke="#333" stroke-width="1.100"/></svg>Escribe aquí para buscar</div>
  <div class="xl-ti"><svg width="16" height="16" viewBox="0 0 16 16"><rect width="16" height="16" fill="#1c3c57" stroke="#4a90c0"/><path d="M4 3l4 10 4-10" fill="none" stroke="#9fd0f2" stroke-width="2"/></svg></div>
  <div class="xl-ti"><svg width="16" height="16" viewBox="0 0 16 16"><circle cx="8" cy="8" r="8" fill="#dfe9f3"/><path d="M0 9l5 2 6-5 4 2-4 6H4z" fill="#14355c"/><circle cx="11" cy="5.500" r="2.500" fill="#14355c"/></svg></div>
  <div class="xl-ti"><svg width="16" height="14" viewBox="0 0 16 14"><path d="M0 0h16v14H0z" fill="#f2d078"/><path d="M0 3h16" stroke="#fff0b8"/><path d="M4 9h8v5H4z" fill="#4db4c8"/></svg></div>
  <div class="xl-ti on"><svg width="16" height="14" viewBox="0 0 16 14"><path d="M8 1h8v12H8z" fill="none" stroke="#a8d9bb"/><path d="M8 4.500h8M8 8h8M12 1v12" stroke="#a8d9bb"/><path d="M0 2h8v10H0z" fill="#1f7a47"/><path d="M2 4.500l4 5M6 4.500l-4 5" stroke="#fff" stroke-width="1.200"/></svg></div>
  <div class="xl-ti"><svg width="15" height="15" viewBox="0 0 15 15"><circle cx="7.500" cy="7.500" r="7.500" fill="#6b3014"/><path d="M3 5l2 5 2.500-3 2.500 3 2-5-1 8H4z" fill="#ef8f3a"/></svg></div>
  <div class="xl-ti"><svg width="16" height="16" viewBox="0 0 16 16"><circle cx="8" cy="8" r="8" fill="#dd4b39"/><path d="M8 8L1 12a8 8 0 0 0 9 3.800z" fill="#2ba24c"/><path d="M8 4h7a8 8 0 0 1-5 11.800L8 8z" fill="#fbc02d"/><circle cx="8" cy="8" r="3.500" fill="#4f8ef0" stroke="#fff"/></svg></div>
  <div class="xl-ti"><svg width="13" height="17" viewBox="0 0 13 17"><rect width="13" height="17" fill="#eee"/><rect x="2" y="2" width="9" height="3" fill="#555"/><path d="M2 7h2v2H2zM5.500 7h2v2h-2zM9 7h2v2H9zM2 10.500h2v2H2zM5.500 10.500h2v2h-2zM9 10.500h2v2H9zM2 14h2v2H2zM5.500 14h2v2h-2zM9 14h2v2H9z" fill="#555"/></svg></div>
  <div class="xl-ti xl-ti-c"><svg width="16" height="16" viewBox="0 0 16 16"><rect width="16" height="16" fill="#6d9a3c"/><path d="M12 5H6v6h6" fill="none" stroke="#eaf4d8" stroke-width="2.200"/></svg></div>
  <div class="xl-tray">
    <svg width="12" height="12" viewBox="0 0 12 12"><circle cx="8.500" cy="3" r="2" fill="none" stroke="#ddd"/><path d="M6 8c0-2 1-3 2.500-3s2.500 1 2.500 3" fill="none" stroke="#ddd"/><circle cx="3.500" cy="6.500" r="1.500" fill="none" stroke="#ddd"/><path d="M1 12c0-2 1-3 2.500-3S6 10 6 12" fill="none" stroke="#ddd"/></svg>
    <svg style="margin-left:14px" width="8" height="5" viewBox="0 0 8 5"><path d="M.5 4.500L4 1l3.500 3.500" fill="none" stroke="#eee"/></svg>
    <svg style="margin-left:7px" width="11" height="11" viewBox="0 0 11 11"><rect width="11" height="11" fill="#c8262b"/><path d="M2 6h7v3H2z" fill="#eee"/></svg>
    <svg style="margin-left:4px" width="11" height="10" viewBox="0 0 11 10"><path d="M0 3h2l3-3v10L2 7H0z" fill="#cfcfcf"/><path d="M7 3c1 1 1 3 0 4M9 1.500c2 2 2 5 0 7" fill="none" stroke="#999"/></svg>
    <span style="margin-left:8px;width:20px">ESP</span>
    <div class="xl-clock">19:46<br>4/02/2019</div>
  </div>
</footer>
</div>
<script src="https://cdn.jsdelivr.net/npm/bootstrap@5.3.0/dist/js/bootstrap.bundle.min.js"></script>
</body>
</html>
